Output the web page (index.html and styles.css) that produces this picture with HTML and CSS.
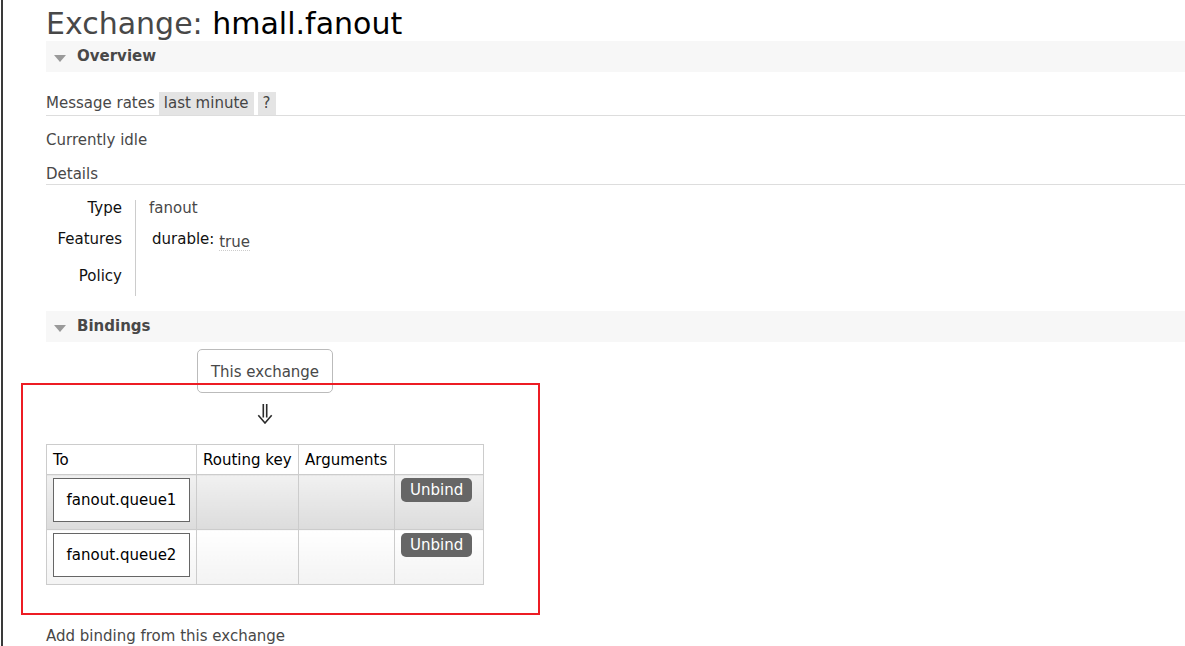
FILE: index.html
```html
<!DOCTYPE html>
<html lang="en">
<head>
<meta charset="UTF-8" />
<title>RabbitMQ Management: Exchange hmall.fanout</title>
<link rel="stylesheet" href="styles.css">
</head>
<body>
<div class="page">
  <h1><span class="muted">Exchange:</span> <b>hmall.fanout</b></h1>

  <h2 class="bar"><span class="tri"></span>Overview</h2>
  <div class="rates">
    <span class="rates-label">Message rates</span>
    <span class="chip">last minute</span>
    <span class="chip">?</span>
  </div>
  <p class="idle">Currently idle</p>
  <h3 class="sub">Details</h3>
  <table class="facts">
    <tr><th>Type</th><td>fanout</td></tr>
    <tr><th>Features</th><td><span class="key">durable:</span> <abbr class="val">true</abbr></td></tr>
    <tr><th>Policy</th><td></td></tr>
  </table>

  <h2 class="bar"><span class="tri"></span>Bindings</h2>
  <div class="bind-wrap">
    <div class="this-ex">This exchange</div>
    <div class="arrow" title="&#8659;">
      <svg width="16" height="20" viewBox="0 0 16 20" aria-hidden="true">
        <path d="M6.3 0V13.5M9.7 0V13.5M1.3 11.3L8 19L14.7 11.3" fill="none" stroke="#2a2a2a" stroke-width="1.6"/>
      </svg>
    </div>
    <table class="bindings">
      <tr>
        <th>To</th>
        <th>Routing key</th>
        <th>Arguments</th>
        <th></th>
      </tr>
      <tr class="alt1">
        <td><span class="queue">fanout.queue1</span></td>
        <td></td>
        <td></td>
        <td><button class="unbind">Unbind</button></td>
      </tr>
      <tr class="alt2">
        <td><span class="queue">fanout.queue2</span></td>
        <td></td>
        <td></td>
        <td><button class="unbind">Unbind</button></td>
      </tr>
    </table>
  </div>

  <h3 class="sub add">Add binding from this exchange</h3>

  <!-- highlight drawn over the bindings -->
  <div class="mark"></div>
</div>
</body>
</html>
```

FILE: styles.css
```css
body {
  margin: 0;
  font-family: "DejaVu Sans", Verdana, sans-serif;
  font-size: 15px;
  line-height: 17px;
  color: #484848;
  background: #fff;
}

.page {
  position: relative;
  min-height: 646px;
  box-sizing: border-box;
  margin-left: 1px;
  border-left: 2px solid #3a3a3a;
  padding-left: 43px;
  overflow: hidden;
}

h1 {
  margin: 0;
  padding-top: 6px;
  font-size: 30px;
  line-height: 35px;
  font-weight: normal;
}
h1 .muted { color: #484848; }
h1 b { font-weight: normal; color: #000; }

.bar {
  display: flex;
  align-items: center;
  margin: 0;
  height: 31px;
  background: #f7f7f7;
  font-size: 15px;
  font-weight: bold;
  color: #484848;
}
.tri {
  width: 0;
  height: 0;
  margin: 3px 11px 0 8px;
  border-top: 7px solid #9a9a9a;
  border-left: 6px solid transparent;
  border-right: 6px solid transparent;
}

.rates {
  display: flex;
  align-items: flex-end;
  margin-top: 20px;
  height: 23px;
  border-bottom: 1px solid #ddd;
}
.rates-label { padding: 3px 0; }
.chip {
  margin-left: 4px;
  padding: 3px 5px;
  background: #e4e4e4;
  color: #444;
}

.idle {
  margin: 16px 0 0;
}

.sub {
  margin: 17px 0 0;
  padding-bottom: 1px;
  font-size: 15px;
  font-weight: normal;
  border-bottom: 1px solid #ddd;
}

.facts {
  margin-top: 15px;
  border-collapse: collapse;
  line-height: 15px;
}
.facts th {
  width: 76px;
  padding: 1px 13px 0 0;
  text-align: right;
  font-weight: normal;
  color: #111;
  vertical-align: top;
  border-right: 1px solid #ccc;
}
.facts td {
  padding: 1px 0 0 13px;
  vertical-align: top;
}
.facts tr:nth-child(1) th, .facts tr:nth-child(1) td { height: 30px; }
.facts tr:nth-child(2) th, .facts tr:nth-child(2) td { height: 36px; }
.facts tr:nth-child(3) th, .facts tr:nth-child(3) td { height: 27px; }
.facts .key { padding-left: 3px; color: #111; }
.facts .val {
  display: inline-block;
  vertical-align: -3px;
  text-decoration: none;
  border-bottom: 1px dotted #ccc;
  line-height: 16px;
}

.bar + .bind-wrap { margin-top: 7px; }
.facts + .bar { margin-top: 15px; }

.bind-wrap {
  display: inline-flex;
  flex-direction: column;
  align-items: center;
}
.this-ex {
  padding: 14px 13px 11px;
  border: 1px solid #bbb;
  border-radius: 5px;
}
.arrow {
  height: 51px;
}
.arrow svg {
  display: block;
  margin-top: 11px;
}

.bindings {
  border-collapse: collapse;
  table-layout: fixed;
  color: #000;
}
.bindings th, .bindings td {
  border: 1px solid #ccc;
  text-align: left;
  vertical-align: top;
}
.bindings th {
  padding: 7px 6px 5px;
  font-weight: normal;
}
.bindings th:nth-child(1) { width: 137px; }
.bindings th:nth-child(2) { width: 89px; }
.bindings th:nth-child(3) { width: 83px; }
.bindings th:nth-child(4) { width: 76px; }
.bindings td { padding: 3px 6px 7px; }
.bindings tr.alt1 td { background: linear-gradient(#f1f1f1, #dcdcdc); }
.bindings tr.alt2 td { background: linear-gradient(#ffffff, #f3f3f3); }

.queue {
  display: block;
  padding: 13px 0 12px;
  border: 1px solid #666;
  background: #fff;
  text-align: center;
}
.unbind {
  padding: 4px 9px 3px;
  border: none;
  border-radius: 5px;
  background: #666;
  color: #fff;
  font-family: inherit;
  font-size: 15px;
  line-height: 17px;
}

.add { margin-top: 43px; }

.mark {
  position: absolute;
  left: 18px;
  top: 383px;
  width: 519px;
  height: 232px;
  box-sizing: border-box;
  border: 2px solid #ed1c24;
  pointer-events: none;
}
```
